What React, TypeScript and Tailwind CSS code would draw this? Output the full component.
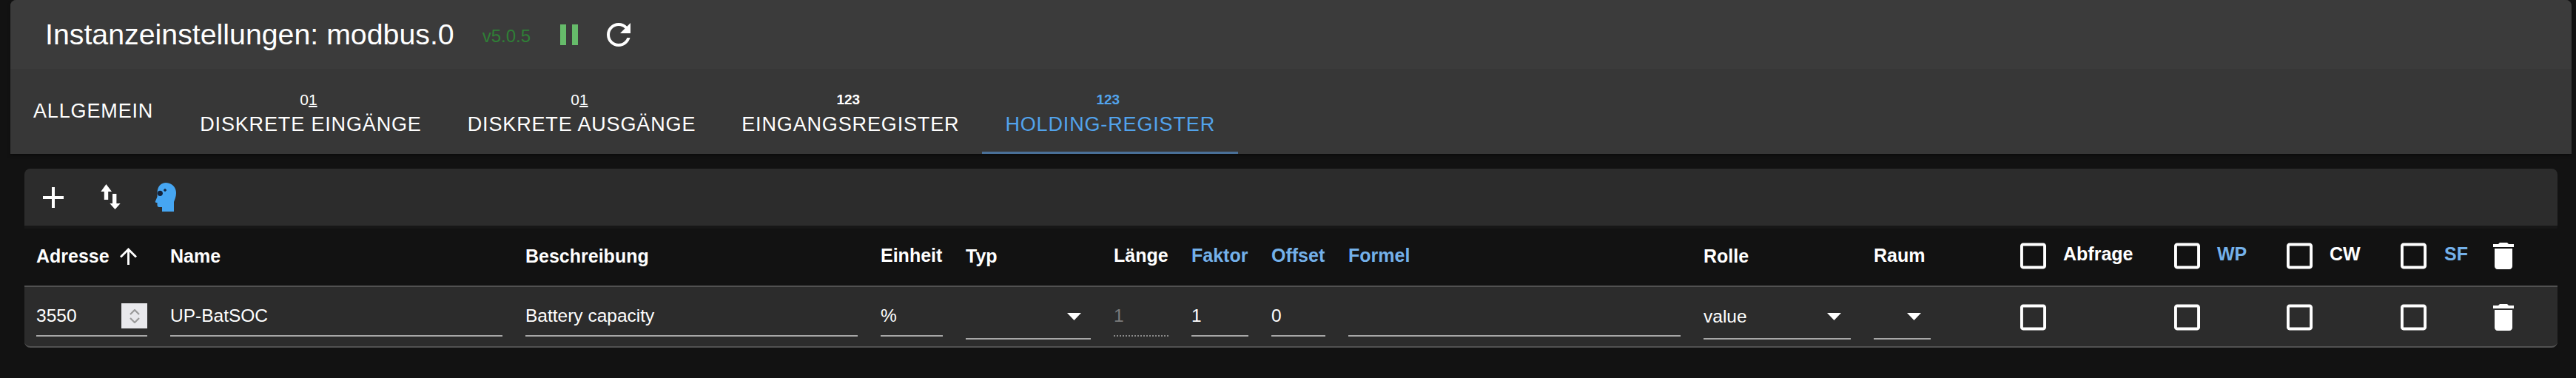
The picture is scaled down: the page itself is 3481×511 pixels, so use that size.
const Check = () => (
  <svg viewBox="3 3 18 18" className="w-[35px] h-[36px] shrink-0" fill="#fff">
    <path d="M19 5v14H5V5h14m0-2H5c-1.1 0-2 .9-2 2v14c0 1.1.9 2 2 2h14c1.1 0 2-.9 2-2V5c0-1.1-.9-2-2-2z" />
  </svg>
);
const Trash = () => (
  <svg viewBox="5 3 14 18" className="w-[28px] h-[36px] shrink-0" fill="#fff">
    <path d="M6 19c0 1.1.9 2 2 2h8c1.1 0 2-.9 2-2V7H6v12zM19 4h-3.5l-1-1h-5l-1 1H5v2h14V4z" />
  </svg>
);
const Caret = () => (
  <svg viewBox="0 0 19 10" className="w-[19px] h-[10px] shrink-0" fill="#fff">
    <path d="M0 0h19L9.5 10z" />
  </svg>
);

const TextField = ({ value = "", dotted = false, dim = false }: { value?: string; dotted?: boolean; dim?: boolean }) => (
  <div className={`h-[44px] pb-[10px] flex items-center border-b-2 ${dotted ? "border-dotted border-[#8a8a8a]" : "border-[#a8a8a8]"} ${dim ? "text-[#7b7b7b]" : "text-white"}`}>
    {value}
  </div>
);

const Select = ({ value = "" }: { value?: string }) => (
  <div className="h-[48px] pb-[12px] flex items-center justify-between pr-[13px] border-b-2 border-[#a8a8a8] text-white">
    <span>{value}</span>
    <Caret />
  </div>
);

const Tab = ({ label, icon, active = false }: { label: string; icon?: React.ReactNode; active?: boolean }) => (
  <div className={`h-full px-[31px] flex flex-col items-center justify-center border-b-[3px] ${icon ? "pt-[11px]" : "pt-[2px]"} ${active ? "border-[#4a7098] text-[#52a3ec]" : "border-transparent text-white"}`}>
    {icon}
    <span className="text-[27px] tracking-[0.85px] leading-[32px] uppercase whitespace-nowrap">{label}</span>
  </div>
);

const ZeroOne = () => (
  <span className="text-[21px] leading-[20px] mb-[7px] mr-[6px]">
    0<span className="underline decoration-2 underline-offset-1">1</span>
  </span>
);
const OneTwoThree = () => <span className="text-[19px] leading-[20px] mb-[7px] mr-[6px] font-bold">123</span>;

const gridCols =
  "grid grid-cols-[150px_449px_449px_84px_169px_74px_77px_73px_449px_199px_77px_267px_121px_123px_94px_28px] gap-x-[31px] pl-[16px]";

const HeadLabel = ({ children, blue = false, cls = "" }: { children: React.ReactNode; blue?: boolean; cls?: string }) => (
  <span className={`${blue ? "text-[#74b1ea]" : "text-white"} ${cls}`}>{children}</span>
);

const CheckHead = ({ label, blue = false, gap }: { label: string; blue?: boolean; gap: string }) => (
  <div className={`flex items-center -mt-[3px] ${gap}`}>
    <Check />
    <HeadLabel blue={blue} cls="-mt-[6px]">{label}</HeadLabel>
  </div>
);

export default function App() {
  return (
    <div className="w-[3481px] h-[511px] bg-[#121212] overflow-hidden font-['Liberation_Sans',Arial,sans-serif]">
      <div className="ml-[14px] mr-[6px] h-[208px] flex flex-col rounded-t-[8px] shadow-[0_2px_4px_rgba(0,0,0,0.4)] bg-[#373737]">
        <div className="h-[93px] bg-[#3b3b3b] rounded-t-[8px] flex items-center pl-[47px] text-white">
          <span className="text-[39.3px] leading-none whitespace-nowrap">Instanzeinstellungen: modbus.0</span>
          <span className="ml-[38px] mt-[4px] text-[24px] text-[#2f7f36]">v5.0.5</span>
          <div className="ml-[40px] flex gap-[8px]">
            <div className="w-[8px] h-[28px] bg-[#66bb6a]" />
            <div className="w-[8px] h-[28px] bg-[#66bb6a]" />
          </div>
          <svg viewBox="4 4 16 16" className="ml-[39px] w-[32px] h-[32px]" fill="#fff">
            <path d="M17.65 6.35C16.2 4.9 14.21 4 12 4c-4.42 0-7.99 3.58-7.99 8s3.57 8 7.99 8c3.73 0 6.84-2.55 7.73-6h-2.08c-.82 2.33-3.04 4-5.65 4-3.31 0-6-2.69-6-6s2.69-6 6-6c1.66 0 3.14.69 4.22 1.78L13 11h7V4l-2.35 2.35z" />
          </svg>
        </div>
        <div className="h-[115px] flex items-stretch">
          <Tab label="Allgemein" />
          <div className="w-[1px]" />
          <Tab label="Diskrete Eingänge" icon={<ZeroOne />} />
          <Tab label="Diskrete Ausgänge" icon={<ZeroOne />} />
          <Tab label="Eingangsregister" icon={<OneTwoThree />} />
          <Tab label="Holding-Register" icon={<OneTwoThree />} active />
        </div>
      </div>

      <div className="mt-[20px] ml-[33px] mr-[25px] flex flex-col">
        <div className="h-[77px] bg-[#2c2c2c] rounded-t-[8px] flex items-center">
          <svg viewBox="5 5 14 14" className="ml-[25px] w-[28px] h-[28px]" fill="#fff">
            <path d="M19 13h-6v6h-2v-6H5v-2h6V5h2v6h6v2z" />
          </svg>
          <svg viewBox="0 0 27 34" className="ml-[50px] -mt-[1px] w-[27px] h-[34px]" fill="#fff">
            <path d="M7.5 0L15 10H10.2V21H4.8V10H0.3z" />
            <path d="M19.5 34L12.3 26H16V13H21.4V26H26.7z" />
          </svg>
          <svg viewBox="0 0 29 39" className="ml-[46px] w-[29px] h-[39px]">
            <path fill="#46a6f2" d="M15 0C23 0 29 6 29 14C29 19 27 23 26 26V39H10V33H6C4.5 33 3.5 32 3.5 30V27H2C1 27 .5 26 1 25L3.5 19V14C3.5 6 8 0 15 0Z" />
            <circle cx="7.3" cy="14.3" r="3.6" fill="#14233a" />
            <path d="M12 10h4M14 8v4" stroke="#14233a" strokeWidth="1.5" />
          </svg>
        </div>
        <div className="h-[81px] bg-[#121212] border-t-[4px] border-[#171717] text-[25px] font-bold">
          <div className={`${gridCols} h-full items-center leading-none`}>
            <div className="flex items-center justify-between -mt-[3px] pr-[14px]">
              <HeadLabel>Adresse</HeadLabel>
              <svg viewBox="4 4 16 16" className="w-[23px] h-[23px]" fill="#fff">
                <path d="M4 12l1.41 1.41L11 7.83V20h2V7.83l5.58 5.59L20 12l-8-8-8 8z" />
              </svg>
            </div>
            <HeadLabel cls="-mt-[3px]">Name</HeadLabel>
            <HeadLabel cls="-mt-[3px]">Beschreibung</HeadLabel>
            <HeadLabel cls="-mt-[5px]">Einheit</HeadLabel>
            <HeadLabel cls="-mt-[3px]">Typ</HeadLabel>
            <HeadLabel cls="-mt-[5px]">Länge</HeadLabel>
            <HeadLabel blue cls="-mt-[5px]">Faktor</HeadLabel>
            <HeadLabel blue cls="-mt-[5px]">Offset</HeadLabel>
            <HeadLabel blue cls="-mt-[5px]">Formel</HeadLabel>
            <HeadLabel cls="-mt-[3px]">Rolle</HeadLabel>
            <HeadLabel cls="-mt-[5px]">Raum</HeadLabel>
            <div className="pl-[90px]"><CheckHead label="Abfrage" gap="gap-[23px]" /></div>
            <CheckHead label="WP" blue gap="gap-[23px]" />
            <CheckHead label="CW" gap="gap-[23px]" />
            <CheckHead label="SF" blue gap="gap-[24px]" />
            <div className="-mt-[3px]"><Trash /></div>
          </div>
        </div>
        <div className="h-[84px] bg-[#2c2c2c] border-y-2 border-[#515151] rounded-b-[8px] text-[24.5px] leading-none">
          <div className={`${gridCols} h-full items-start pt-[23px]`}>
            <div className="relative">
              <TextField value="3550" />
              <div className="absolute right-0 -top-[1px] w-[35px] h-[34px] bg-[#e8e8ec] flex flex-col items-center justify-center gap-[3px]">
                <svg viewBox="0 0 14 8" className="w-[14px] h-[8px]" fill="none" stroke="#9a9a9a" strokeWidth="2.2"><path d="M1 7l6-6 6 6" /></svg>
                <svg viewBox="0 0 14 8" className="w-[14px] h-[8px]" fill="none" stroke="#9a9a9a" strokeWidth="2.2"><path d="M1 1l6 6 6-6" /></svg>
              </div>
            </div>
            <TextField value="UP-BatSOC" />
            <TextField value="Battery capacity" />
            <TextField value="%" />
            <Select />
            <TextField value="1" dotted dim />
            <TextField value="1" />
            <TextField value="0" />
            <TextField />
            <Select value="value" />
            <Select />
            <div className="pl-[90px]"><Check /></div>
            <Check />
            <Check />
            <Check />
            <Trash />
          </div>
        </div>
      </div>
    </div>
  );
}
